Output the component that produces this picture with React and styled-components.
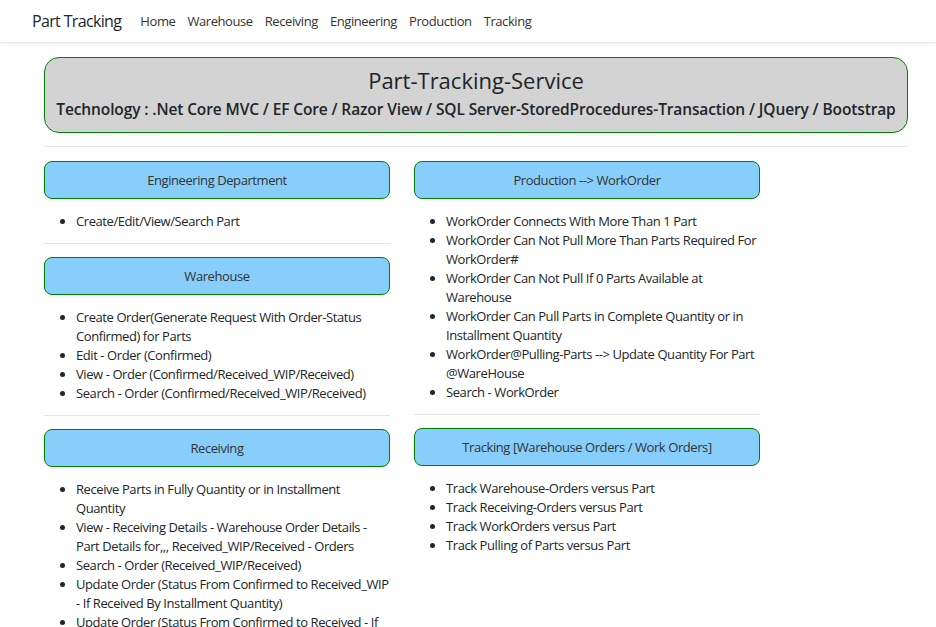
import React from 'react'
import styled, {createGlobalStyle} from 'styled-components'

const GlobalStyle = createGlobalStyle`
  body {
    margin: 0;
    font-family: "Open Sans", "Noto Sans", sans-serif;
    font-size: 13px;
    line-height: 19px;
    letter-spacing: -0.42px;
    color: #212529;
    background: #fff;
  }
`

const navLinks = ['Home', 'Warehouse', 'Receiving', 'Engineering', 'Production', 'Tracking']

const sections = {
  left: [
    {title: 'Engineering Department', items: ['Create/Edit/View/Search Part']},
    {title: 'Warehouse', items: [
      'Create Order(Generate Request With Order-Status Confirmed) for Parts',
      'Edit - Order (Confirmed)',
      'View - Order (Confirmed/Received_WIP/Received)',
      'Search - Order (Confirmed/Received_WIP/Received)',
    ]},
    {title: 'Receiving', items: [
      'Receive Parts in Fully Quantity or in Installment Quantity',
      'View - Receiving Details - Warehouse Order Details - Part Details for,,, Received_WIP/Received - Orders',
      'Search - Order (Received_WIP/Received)',
      'Update Order (Status From Confirmed to Received_WIP - If Received By Installment Quantity)',
      'Update Order (Status From Confirmed to Received - If Received By Fully Quantity)',
    ]},
  ],
  right: [
    {title: 'Production --> WorkOrder', items: [
      'WorkOrder Connects With More Than 1 Part',
      'WorkOrder Can Not Pull More Than Parts Required For WorkOrder#',
      'WorkOrder Can Not Pull If 0 Parts Available at Warehouse',
      'WorkOrder Can Pull Parts in Complete Quantity or in Installment Quantity',
      'WorkOrder@Pulling-Parts --> Update Quantity For Part @WareHouse',
      'Search - WorkOrder',
    ]},
    {title: 'Tracking [Warehouse Orders / Work Orders]', items: [
      'Track Warehouse-Orders versus Part',
      'Track Receiving-Orders versus Part',
      'Track WorkOrders versus Part',
      'Track Pulling of Parts versus Part',
    ]},
  ],
}

export default function App() {
  return (
    <>
      <GlobalStyle />
      <Navbar>
        <Brand>Part Tracking</Brand>
        <NavList>
          {navLinks.map((link) => (
            <NavItem key={link}>{link}</NavItem>
          ))}
        </NavList>
      </Navbar>
      <Container>
        <Banner>
          <BannerTitle>Part-Tracking-Service</BannerTitle>
          <BannerSub>Technology : .Net Core MVC / EF Core / Razor View / SQL Server-StoredProcedures-Transaction / JQuery / Bootstrap</BannerSub>
        </Banner>
        <Rule />
        <Columns>
          {['left', 'right'].map((side) => (
            <Column key={side}>
              {sections[side].map((section, index) => (
                <div key={section.title}>
                  <SectionHeader>{section.title}</SectionHeader>
                  <ItemList>
                    {section.items.map((item) => (
                      <li key={item}>{item}</li>
                    ))}
                  </ItemList>
                  {index < sections[side].length - 1 && <SectionRule />}
                </div>
              ))}
            </Column>
          ))}
        </Columns>
      </Container>
    </>
  )
}

const Navbar = styled.nav`
  display: flex;
  align-items: center;
  height: 42px;
  padding: 0 32px;
  border-bottom: 1px solid #e5e5e5;
  box-shadow: 0 2px 4px rgba(0, 0, 0, 0.05);
  background: #fff;
`

const Brand = styled.div`
  font-size: 16px;
  letter-spacing: -0.65px;
  color: #212529;
  margin-right: 13px;
`

const NavList = styled.div`
  display: flex;
`

const NavItem = styled.a`
  font-size: 13px;
  color: #333;
  padding: 0 6px;
  cursor: pointer;
`

const Container = styled.main`
  width: 864px;
  margin: 14px 0 0 44px;
`

const Banner = styled.div`
  background: #d3d3d3;
  border: 1px solid green;
  border-radius: 15px;
  display: flex;
  flex-direction: column;
  align-items: center;
  padding-top: 8px;
  box-sizing: border-box;
  height: 76px;
`

const BannerTitle = styled.h2`
  margin: 0;
  font-size: 22px;
  line-height: 28px;
  font-weight: 500;
  letter-spacing: 0;
`

const BannerSub = styled.h5`
  margin: 3px 0 0;
  font-size: 15.5px;
  line-height: 24px;
  font-weight: 600;
  letter-spacing: -0.12px;
`

const Rule = styled.hr`
  border: 0;
  border-top: 1px solid #e5e5e5;
  margin: 13px 0 14px;
`

const Columns = styled.div`
  display: flex;
  gap: 24px;
`

const Column = styled.div`
  width: 346px;
`

const SectionHeader = styled.div`
  height: 36px;
  line-height: 36px;
  text-align: center;
  background: #87cefa;
  border: 1px solid green;
  border-radius: 8px;
  color: #333;
  font-size: 13px;
`

const ItemList = styled.ul`
  margin: 13px 0 12px;
  padding-left: 32px;
  li {
    color: #212529;
  }
`

const SectionRule = styled.hr`
  border: 0;
  border-top: 1px solid #e5e5e5;
  margin: 0 0 13px;
`
